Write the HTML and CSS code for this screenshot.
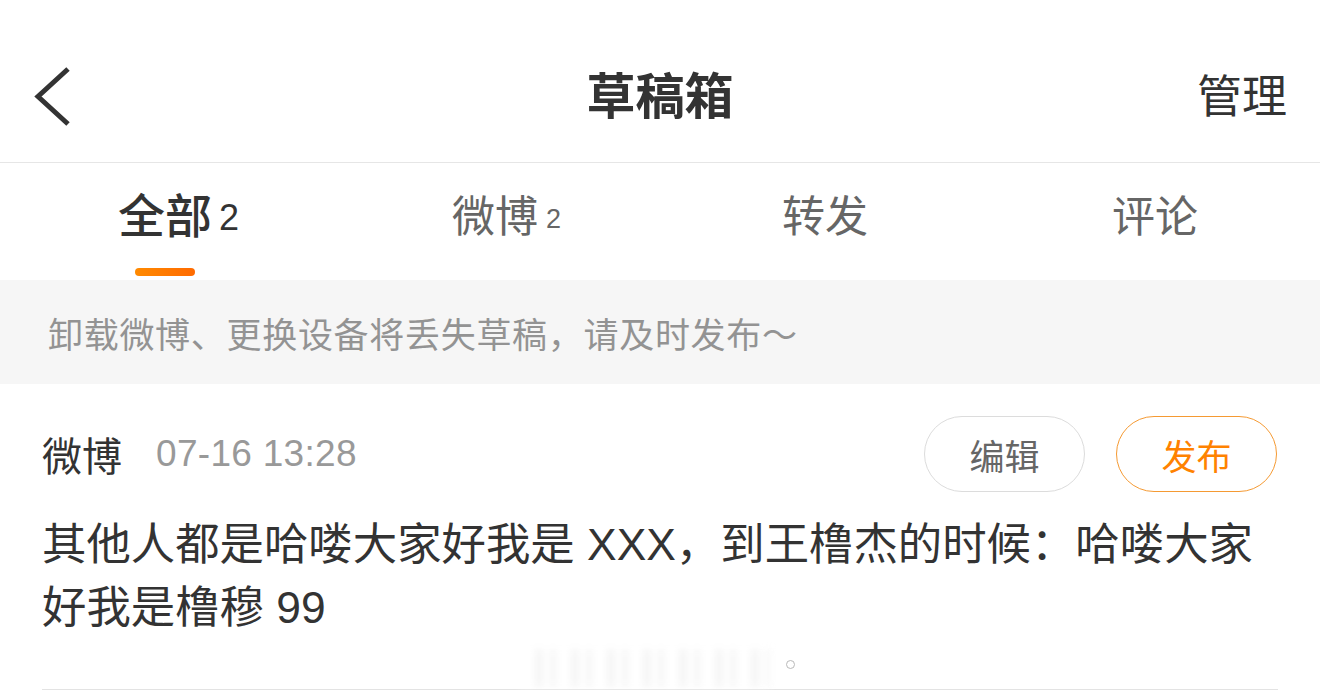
FILE: index.html
```html
<!DOCTYPE html>
<html lang="zh-CN">
<head>
<meta charset="utf-8">
<title>草稿箱</title>
<link rel="stylesheet" href="styles.css">
</head>
<body>
  <header class="navbar">
    <div class="nav-left">
      <svg class="back-icon" width="42" height="64" viewBox="0 0 42 64" aria-hidden="true">
        <polyline points="35,4 5,31.5 35,59" fill="none" stroke="#333" stroke-width="5" stroke-linejoin="miter"/>
      </svg>
    </div>
    <h1 class="nav-title">草稿箱</h1>
    <div class="nav-right">管理</div>
  </header>

  <nav class="tabs">
    <div class="tab tab-active">
      <span class="tab-label">全部<span class="tab-count">2</span></span>
      <span class="tab-bar"></span>
    </div>
    <div class="tab">
      <span class="tab-label">微博<span class="tab-count">2</span></span>
      <span class="tab-bar"></span>
    </div>
    <div class="tab">
      <span class="tab-label">转发</span>
      <span class="tab-bar"></span>
    </div>
    <div class="tab">
      <span class="tab-label">评论</span>
      <span class="tab-bar"></span>
    </div>
  </nav>

  <div class="notice">卸载微博、更换设备将丢失草稿，请及时发布～</div>

  <section class="draft">
    <div class="draft-inner">
      <div class="draft-head">
        <span class="draft-type">微博</span>
        <span class="draft-time">07-16 13:28</span>
        <div class="draft-actions">
          <button class="btn btn-edit">编辑</button>
          <button class="btn btn-publish">发布</button>
        </div>
      </div>
      <p class="draft-text">其他人都是哈喽大家好我是 XXX，到王橹杰的时候：哈喽大家好我是橹穆 99</p>
      <div class="draft-foot">
        <div class="foot-blur"></div>
        <span class="foot-dot"></span>
      </div>
    </div>
  </section>
</body>
</html>
```

FILE: styles.css
```css
* {
  box-sizing: border-box;
}

body {
  margin: 0;
  background: #fff;
  color: #333;
  font-family: "Liberation Sans", "Noto Sans CJK SC", sans-serif;
}

/* top navigation bar */
.navbar {
  height: 163px;
  padding-top: 32px;
  border-bottom: 1px solid #e6e6e6;
  display: grid;
  grid-template-columns: 1fr auto 1fr;
  align-items: center;
}

.nav-left {
  padding-left: 33px;
  display: flex;
  align-items: center;
}

.back-icon {
  display: block;
}

.nav-title {
  margin: 0;
  font-size: 49px;
  font-weight: 700;
  line-height: 1;
  color: #333;
}

.nav-right {
  justify-self: end;
  padding-right: 33px;
  font-size: 45px;
  line-height: 1;
  color: #333;
}

/* category tabs */
.tabs {
  height: 117px;
  display: grid;
  grid-template-columns: repeat(4, 1fr);
}

.tab {
  display: flex;
  flex-direction: column;
  align-items: center;
  padding-top: 24px;
}

.tab-label {
  position: relative;
  font-size: 43px;
  line-height: 60px;
  color: #666;
}

.tab-count {
  position: absolute;
  left: 100%;
  top: 17px;
  margin-left: 8px;
  font-size: 27px;
  line-height: 30px;
  color: #666;
}

.tab-bar {
  width: 60px;
  height: 8px;
  margin-top: 21px;
  border-radius: 4px;
  visibility: hidden;
}

.tab-active .tab-label {
  font-size: 47px;
  font-weight: 500;
  color: #333;
}

.tab-active .tab-count {
  top: 13px;
  margin-left: 7px;
  font-size: 36px;
  line-height: 36px;
  color: #333;
}

.tab-active .tab-bar {
  visibility: visible;
  background: linear-gradient(90deg, #ff8a00, #ff6a00);
}

/* warning strip */
.notice {
  height: 104px;
  display: flex;
  align-items: center;
  padding-left: 48px;
  background: #f6f6f6;
  font-size: 35px;
  letter-spacing: 0.7px;
  color: #939393;
}

/* draft card */
.draft {
  padding: 0 42px 0 42px;
}

.draft-inner {
  border-bottom: 1px solid #e3e3e3;
}

.draft-head {
  margin-top: 32px;
  height: 76px;
  display: flex;
  align-items: center;
}

.draft-type {
  font-size: 40px;
  color: #333;
}

.draft-time {
  margin-left: 34px;
  font-size: 37px;
  letter-spacing: 0.3px;
  color: #999;
}

.draft-actions {
  margin-left: auto;
  margin-right: 1px;
  display: flex;
  gap: 31px;
}

.btn {
  width: 161px;
  height: 76px;
  border-radius: 38px;
  background: #fff;
  font-family: inherit;
  font-size: 35px;
  padding: 0;
}

.btn-edit {
  border: 1.5px solid #dcdcdc;
  color: #666;
}

.btn-publish {
  border: 1.5px solid #f59a33;
  color: #ff8200;
}

.draft-text {
  margin: 21px 0 0;
  font-size: 44.4px;
  line-height: 63px;
  color: #333;
}

.draft-foot {
  height: 50px;
  display: flex;
  align-items: center;
  padding-left: 478px;
}

.foot-blur {
  width: 250px;
  height: 38px;
  margin-top: 8px;
  background: repeating-linear-gradient(90deg,
    #fff 0, #fff 16px,
    #eeeeee 16px, #eeeeee 22px,
    #fff 22px, #fff 30px,
    #f3f3f3 30px, #f3f3f3 36px);
  filter: blur(3.5px);
  opacity: 0.75;
}

.foot-dot {
  width: 9px;
  height: 9px;
  margin-left: 16px;
  border: 1.5px solid #b9b9b9;
  border-radius: 50%;
}
```
